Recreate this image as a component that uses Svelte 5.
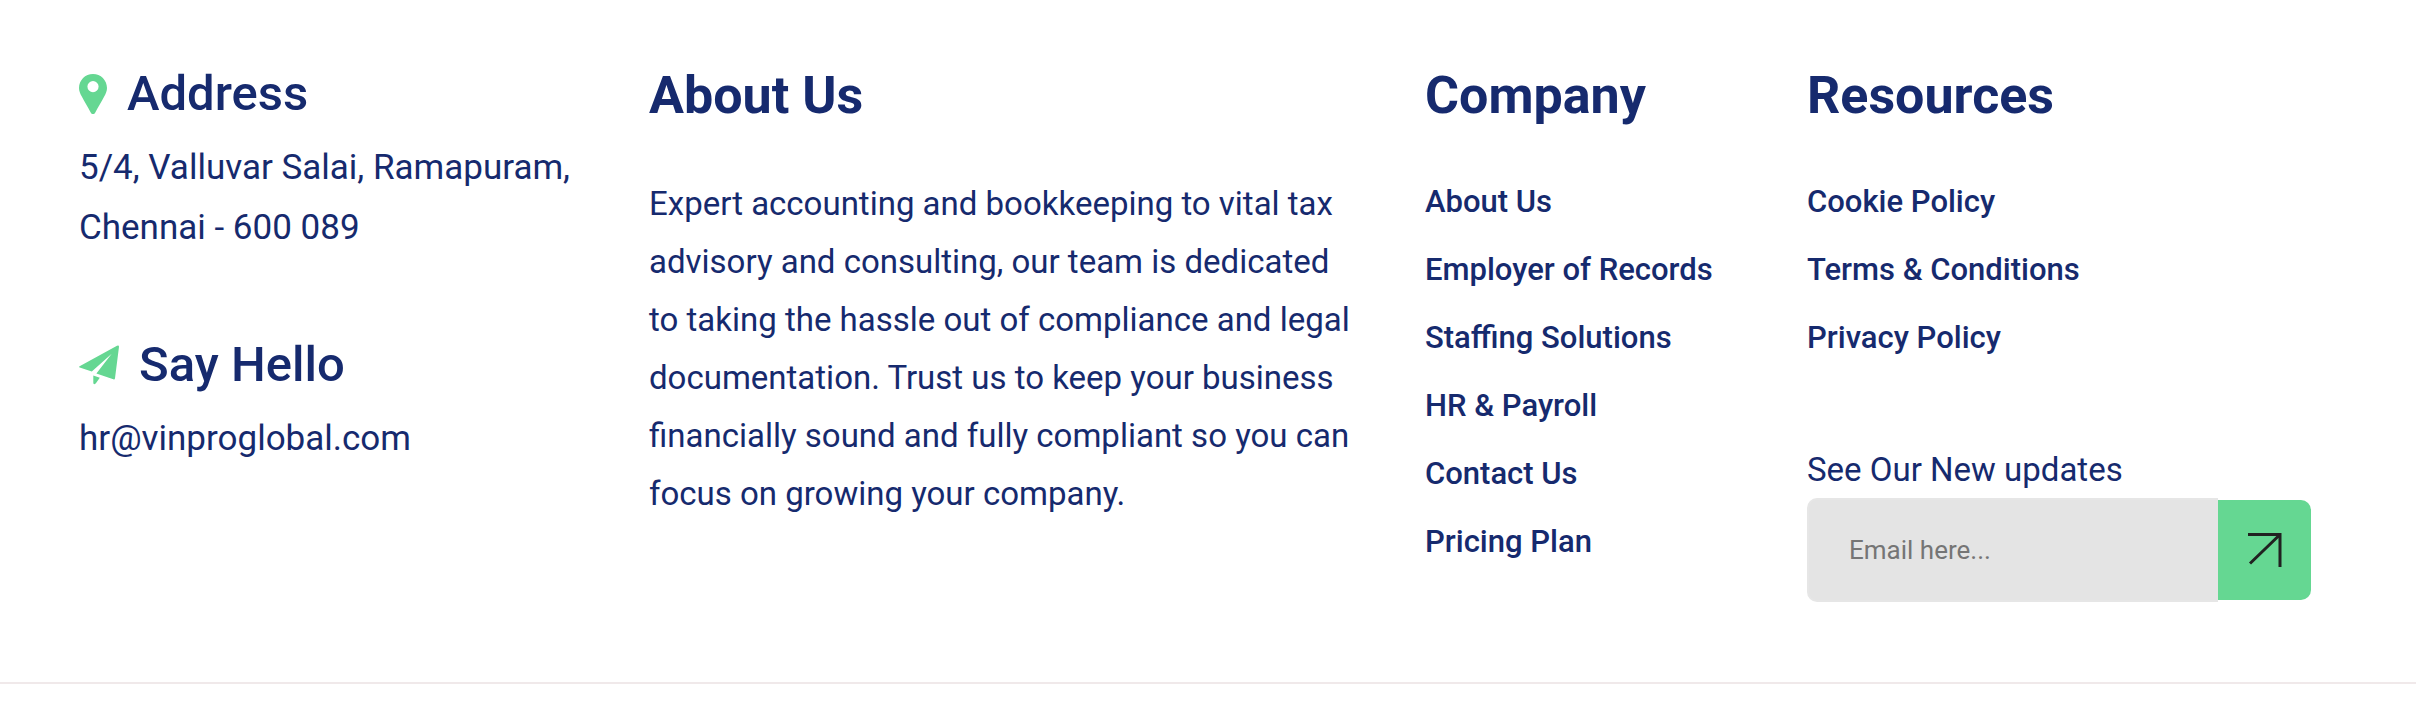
<script>
  const company = ['About Us', 'Employer of Records', 'Staffing Solutions', 'HR & Payroll', 'Contact Us', 'Pricing Plan'];
  const resources = ['Cookie Policy', 'Terms & Conditions', 'Privacy Policy'];
  let email = $state('');
</script>

<footer>
  <div class="columns">
    <section class="contact">
      <div>
        <h3>
          <svg class="pin" viewBox="0 0 28 40" aria-hidden="true">
            <path fill-rule="evenodd" d="M14 0C6.2 0 0 6.2 0 14c0 3 1.2 5.600 2.800 8.600C5.500 27.600 9 33.500 11.700 38.400c.6 1.1 1.200 1.600 2.300 1.600s1.700-.5 2.300-1.600C19 33.500 22.500 27.600 25.200 22.600 26.800 19.600 28 17 28 14 28 6.200 21.800 0 14 0Zm0 7a5.600 5.600 0 1 1 0 11.200A5.600 5.600 0 0 1 14 7Z" />
          </svg>
          Address
        </h3>
        <address>5/4, Valluvar Salai, Ramapuram,<br />Chennai - 600 089</address>
      </div>
      <div>
        <h3>
          <svg class="plane" viewBox="0 0 40 40" aria-hidden="true">
            <path d="M.6 21.200 38 .8Q40 0 40 1.800L36 33.200Q35.800 34.800 34.300 34.300L17.400 28.400 32.700 8.700 12.800 26.600.7 22.500Q-.4 22 .6 21.200ZM14.300 30.400 20.800 32.800 16.900 38.300Q14.300 40.500 14.300 37.600Z" />
          </svg>
          Say Hello
        </h3>
        <a class="mail" href="mailto:hr@vinproglobal.com">hr@vinproglobal.com</a>
      </div>
    </section>

    <section>
      <h2>About Us</h2>
      <p class="about">
        Expert accounting and bookkeeping to vital tax advisory and consulting, our team is dedicated to taking the
        hassle out of compliance and legal documentation. Trust us to keep your business financially sound and fully
        compliant so you can focus on growing your company.
      </p>
    </section>

    <section>
      <h2>Company</h2>
      <ul>
        {#each company as item}
          <li><a href="#top">{item}</a></li>
        {/each}
      </ul>
    </section>

    <section>
      <h2>Resources</h2>
      <ul>
        {#each resources as item}
          <li><a href="#top">{item}</a></li>
        {/each}
      </ul>
      <form onsubmit={(e) => e.preventDefault()}>
        <label for="email">See Our New updates</label>
        <div class="field">
          <input id="email" type="email" placeholder="Email here..." bind:value={email} />
          <button type="submit" aria-label="Subscribe">
            <svg viewBox="0 0 34 34" aria-hidden="true">
              <path d="M0 1.500H32V34M31 2.500 2 30.500" />
            </svg>
          </button>
        </div>
      </form>
    </section>
  </div>
</footer>

<style>
  :global(body) {
    margin: 0;
    background: #fff;
  }

  footer {
    font-family: Roboto, 'Noto Sans', sans-serif;
    font-size: 33px;
    color: #162a6e;
    border-bottom: 2px solid #f0e9ea;
  }

  .columns {
    display: grid;
    grid-template-columns: 570fr 776fr 382fr 504fr;
    padding: 64px 105px 80px 79px;
  }

  section {
    min-width: 0;
  }

  h2,
  h3,
  p,
  ul {
    margin: 0;
    padding: 0;
  }

  a {
    color: inherit;
    text-decoration: none;
  }

  h2 {
    font-size: 52px;
    line-height: 64px;
    font-weight: 700;
  }

  .contact {
    display: flex;
    flex-direction: column;
    gap: 77px;
  }

  h3 {
    display: flex;
    align-items: center;
    gap: 20px;
    margin-bottom: 14px;
    font-size: 49px;
    line-height: 60px;
    font-weight: 500;
  }

  h3 svg {
    flex: none;
    height: 40px;
    fill: #65d792;
  }

  .pin {
    width: 28px;
  }

  .plane {
    width: 40px;
  }

  address,
  .mail {
    display: block;
    font-size: 35px;
    font-style: normal;
    line-height: 60px;
    white-space: nowrap;
  }

  .about {
    max-width: 710px;
    margin-top: 47px;
    line-height: 58px;
  }

  ul {
    display: grid;
    gap: 28px;
    margin-top: 54px;
    list-style: none;
  }

  li {
    font-size: 31px;
    line-height: 40px;
    font-weight: 500;
    white-space: nowrap;
  }

  form {
    margin-top: 84px;
  }

  label {
    display: block;
    line-height: 56px;
  }

  .field {
    display: flex;
    align-items: center;
  }

  input {
    flex: 1;
    min-width: 0;
    box-sizing: border-box;
    height: 104px;
    padding: 0 40px;
    border: 2px solid #e6e6e6;
    border-right: 0;
    border-radius: 10px 0 0 10px;
    background: #e4e4e4;
    color: #162a6e;
    font: 26px Roboto, 'Noto Sans', sans-serif;
  }

  input::placeholder {
    color: #757575;
    opacity: 1;
  }

  button {
    display: grid;
    place-items: center;
    width: 93px;
    height: 100px;
    padding: 0;
    border: 0;
    border-radius: 0 10px 10px 0;
    background: #65d792;
  }

  button svg {
    width: 34px;
    height: 34px;
    fill: none;
    stroke: #212121;
    stroke-width: 3;
  }
</style>
